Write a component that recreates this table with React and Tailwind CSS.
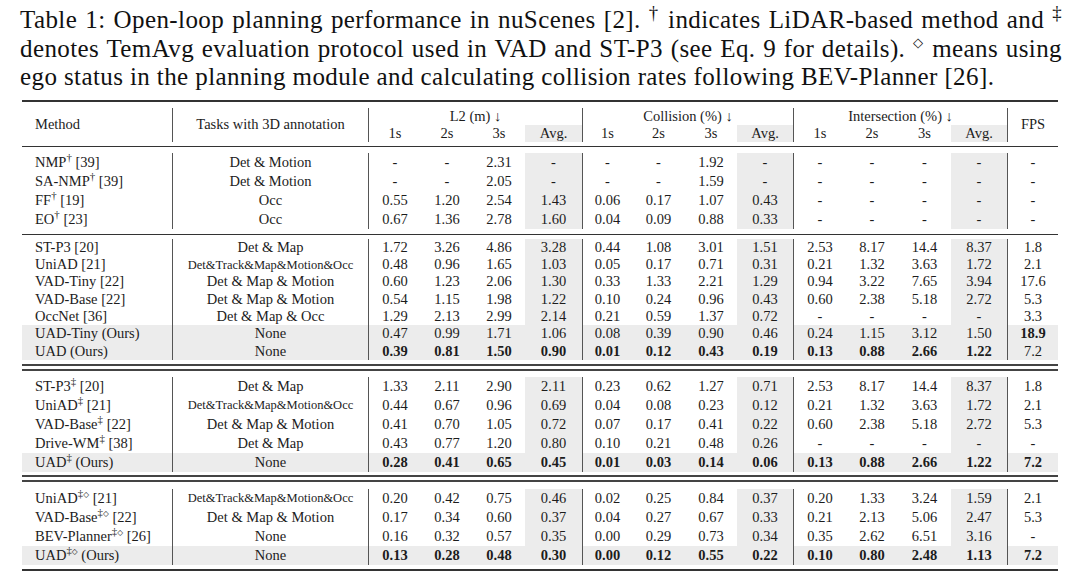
// Table 1 screenshot — open-loop planning results, rendered as a booktabs-style table.

const FONT = "font-['Liberation_Serif','DejaVu_Serif',serif]";
const SHADE = "bg-[#ececec]";

// column classes for every body row (widths add up to 1036px)
const COLS = [
  "w-[150px] justify-start pl-[13px]",
  "w-[196px] justify-center border-l border-[#555]",
  "w-[53px] justify-center border-l border-[#555]",
  "w-[52px] justify-center",
  "w-[52px] justify-center",
  "w-[57px] justify-center bg-[#ececec]",
  "w-[50px] justify-center border-l border-[#555]",
  "w-[53px] justify-center",
  "w-[52px] justify-center",
  "w-[56px] justify-center bg-[#ececec]",
  "w-[53px] justify-center border-l border-[#555]",
  "w-[52px] justify-center",
  "w-[53px] justify-center",
  "w-[56px] justify-center bg-[#ececec]",
  "w-[51px] justify-center border-l border-[#555]",
];

// small outlined diamond (\diamond)
const Dia = () => <span className="text-[0.7em]">◇</span>;

const mark = (k) =>
  k === "dd" ? (
    <sup>
      ‡<Dia />
    </sup>
  ) : k ? (
    <sup>{k}</sup>
  ) : null;

const m = (name, k, ref) => (
  <span>
    {name}
    {mark(k)} {ref}
  </span>
);

const SMALL = "Det&Track&Map&Motion&Occ";
const D = ["-", "-", "-", "-"];

const sec1 = [
  { m: m("NMP", "†", "[39]"), t: "Det & Motion", v: ["-", "-", "2.31", "-", "-", "-", "1.92", "-", ...D, "-"] },
  { m: m("SA-NMP", "†", "[39]"), t: "Det & Motion", v: ["-", "-", "2.05", "-", "-", "-", "1.59", "-", ...D, "-"] },
  { m: m("FF", "†", "[19]"), t: "Occ", v: ["0.55", "1.20", "2.54", "1.43", "0.06", "0.17", "1.07", "0.43", ...D, "-"] },
  { m: m("EO", "†", "[23]"), t: "Occ", v: ["0.67", "1.36", "2.78", "1.60", "0.04", "0.09", "0.88", "0.33", ...D, "-"] },
];

const sec2 = [
  { m: m("ST-P3", null, "[20]"), t: "Det & Map", v: ["1.72", "3.26", "4.86", "3.28", "0.44", "1.08", "3.01", "1.51", "2.53", "8.17", "14.4", "8.37", "1.8"] },
  { m: m("UniAD", null, "[21]"), t: SMALL, small: true, v: ["0.48", "0.96", "1.65", "1.03", "0.05", "0.17", "0.71", "0.31", "0.21", "1.32", "3.63", "1.72", "2.1"] },
  { m: m("VAD-Tiny", null, "[22]"), t: "Det & Map & Motion", v: ["0.60", "1.23", "2.06", "1.30", "0.33", "1.33", "2.21", "1.29", "0.94", "3.22", "7.65", "3.94", "17.6"] },
  { m: m("VAD-Base", null, "[22]"), t: "Det & Map & Motion", v: ["0.54", "1.15", "1.98", "1.22", "0.10", "0.24", "0.96", "0.43", "0.60", "2.38", "5.18", "2.72", "5.3"] },
  { m: m("OccNet", null, "[36]"), t: "Det & Map & Occ", v: ["1.29", "2.13", "2.99", "2.14", "0.21", "0.59", "1.37", "0.72", ...D, "3.3"] },
  { m: <span>UAD-Tiny (Ours)</span>, t: "None", shade: true, v: ["0.47", "0.99", "1.71", "1.06", "0.08", "0.39", "0.90", "0.46", "0.24", "1.15", "3.12", "1.50", "*18.9"] },
  { m: <span>UAD (Ours)</span>, t: "None", shade: true, v: ["*0.39", "*0.81", "*1.50", "*0.90", "*0.01", "*0.12", "*0.43", "*0.19", "*0.13", "*0.88", "*2.66", "*1.22", "7.2"] },
];

const sec3 = [
  { m: m("ST-P3", "‡", "[20]"), t: "Det & Map", v: ["1.33", "2.11", "2.90", "2.11", "0.23", "0.62", "1.27", "0.71", "2.53", "8.17", "14.4", "8.37", "1.8"] },
  { m: m("UniAD", "‡", "[21]"), t: SMALL, small: true, v: ["0.44", "0.67", "0.96", "0.69", "0.04", "0.08", "0.23", "0.12", "0.21", "1.32", "3.63", "1.72", "2.1"] },
  { m: m("VAD-Base", "‡", "[22]"), t: "Det & Map & Motion", v: ["0.41", "0.70", "1.05", "0.72", "0.07", "0.17", "0.41", "0.22", "0.60", "2.38", "5.18", "2.72", "5.3"] },
  { m: m("Drive-WM", "‡", "[38]"), t: "Det & Map", v: ["0.43", "0.77", "1.20", "0.80", "0.10", "0.21", "0.48", "0.26", ...D, "-"] },
  { m: m("UAD", "‡", "(Ours)"), t: "None", shade: true, v: ["*0.28", "*0.41", "*0.65", "*0.45", "*0.01", "*0.03", "*0.14", "*0.06", "*0.13", "*0.88", "*2.66", "*1.22", "*7.2"] },
];

const sec4 = [
  { m: m("UniAD", "dd", "[21]"), t: SMALL, small: true, v: ["0.20", "0.42", "0.75", "0.46", "0.02", "0.25", "0.84", "0.37", "0.20", "1.33", "3.24", "1.59", "2.1"] },
  { m: m("VAD-Base", "dd", "[22]"), t: "Det & Map & Motion", v: ["0.17", "0.34", "0.60", "0.37", "0.04", "0.27", "0.67", "0.33", "0.21", "2.13", "5.06", "2.47", "5.3"] },
  { m: m("BEV-Planner", "dd", "[26]"), t: "None", v: ["0.16", "0.32", "0.57", "0.35", "0.00", "0.29", "0.73", "0.34", "0.35", "2.62", "6.51", "3.16", "-"] },
  { m: m("UAD", "dd", "(Ours)"), t: "None", shade: true, v: ["*0.13", "*0.28", "*0.48", "*0.30", "*0.00", "*0.12", "*0.55", "*0.22", "*0.10", "*0.80", "*2.48", "*1.13", "*7.2"] },
];

function Row({ row, h }) {
  return (
    <div className={`flex ${h} ${row.shade ? SHADE : ""}`}>
      <div className={`flex h-full shrink-0 items-center ${COLS[0]}`}>{row.m}</div>
      <div className={`flex h-full shrink-0 items-center ${COLS[1]} ${row.small ? "text-[12.5px]" : ""}`}>
        {row.t}
      </div>
      {row.v.map((v, i) => {
        const bold = v.startsWith("*");
        return (
          <div key={i} className={`flex h-full shrink-0 items-center ${COLS[i + 2]} ${bold ? "font-bold" : ""}`}>
            {bold ? v.slice(1) : v}
          </div>
        );
      })}
    </div>
  );
}

function Group({ label, widths }) {
  const subs = ["1s", "2s", "3s", "Avg."];
  return (
    <div className="flex shrink-0 flex-col border-l border-[#555]">
      <div className="flex h-[17px] items-center justify-center">{label}</div>
      <div className="flex h-[17px]">
        {widths.map((w, i) => (
          <div key={i} className={`flex items-center justify-center ${w}`}>
            {subs[i]}
          </div>
        ))}
      </div>
    </div>
  );
}

const Rule = ({ cls }) => <div className={cls} />;

export default function App() {
  return (
    <div className={`h-[579px] w-[1080px] overflow-hidden bg-white text-[#1c1c1c] ${FONT}`}>
      {/* ── Caption ─────────────────────────────────────────── */}
      <div className="pl-[20px] pr-[18px] pt-[6px] text-[25px] leading-[28.5px] tracking-[0.4px] text-[#111]">
        <div className="text-justify [text-align-last:justify]">
          Table 1: Open-loop planning performance in nuScenes [2]. <sup>†</sup> indicates LiDAR-based method and{" "}
          <sup>‡</sup>
        </div>
        <div className="text-justify [text-align-last:justify]">
          denotes TemAvg evaluation protocol used in VAD and ST-P3 (see Eq. 9 for details).{" "}
          <sup>
            <Dia />
          </sup>{" "}
          means using
        </div>
        <div>ego status in the planning module and calculating collision rates following BEV-Planner [26].</div>
      </div>

      {/* ── Table ───────────────────────────────────────────── */}
      <div className="ml-[22px] mt-[8.5px] w-[1036px] text-[14.5px]">
        <Rule cls="h-[2px] bg-[#333]" />

        <div className="flex pb-[4px] pt-[6px]">
          <div className="flex h-[34px] w-[150px] shrink-0 items-center pl-[13px]">Method</div>
          <div className="flex h-[34px] w-[196px] shrink-0 items-center justify-center border-l border-[#555]">
            Tasks with 3D annotation
          </div>
          <Group label="L2 (m) ↓" widths={["w-[52px]", "w-[52px]", "w-[52px]", "w-[57px] bg-[#ececec]"]} />
          <Group label="Collision (%) ↓" widths={["w-[49px]", "w-[53px]", "w-[52px]", "w-[56px] bg-[#ececec]"]} />
          <Group label="Intersection (%) ↓" widths={["w-[52px]", "w-[52px]", "w-[53px]", "w-[56px] bg-[#ececec]"]} />
          <div className="flex h-[34px] w-[51px] shrink-0 items-center justify-center border-l border-[#555]">FPS</div>
        </div>

        <Rule cls="h-px bg-[#333]" />
        <div className="pb-[5px] pt-[6px]">
          {sec1.map((r, i) => (
            <Row key={i} row={r} h="h-[19px]" />
          ))}
        </div>

        <Rule cls="h-px bg-[#333]" />
        <div className="pb-[4px] pt-[4px]">
          {sec2.map((r, i) => (
            <Row key={i} row={r} h="h-[17.3px]" />
          ))}
        </div>

        <Rule cls="h-[7px] border-y-2 border-[#444]" />
        <div className="pb-[3px] pt-[6px]">
          {sec3.map((r, i) => (
            <Row key={i} row={r} h="h-[19px]" />
          ))}
        </div>

        <Rule cls="h-[7px] border-y-2 border-[#444]" />
        <div className="pb-[4px] pt-[7px]">
          {sec4.map((r, i) => (
            <Row key={i} row={r} h="h-[19px]" />
          ))}
        </div>
        <Rule cls="h-[2px] bg-[#333]" />
      </div>
    </div>
  );
}
